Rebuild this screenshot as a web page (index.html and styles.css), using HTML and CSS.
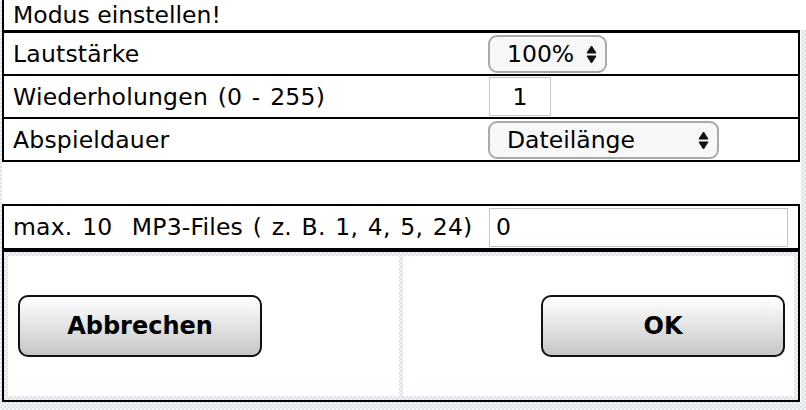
FILE: index.html
```html
<!DOCTYPE html>
<html lang="de">
<head>
<meta charset="utf-8">
<title>Modus einstellen!</title>
<link rel="stylesheet" href="styles.css">
</head>
<body>
<div class="title">Modus einstellen!</div>
<div class="panel">
  <div class="settings">
    <div class="row">
      <div class="label">Lautstärke</div>
      <div class="ctrl">
        <div class="select select-vol">
          <span class="select-text">100%</span>
          <svg class="arrows" width="11" height="19" viewBox="0 0 11 19"><path d="M1 8 L5.5 1 L10 8 Z M1 11 L5.5 18 L10 11 Z" fill="#111" stroke="#111" stroke-width="1" stroke-linejoin="round"/></svg>
        </div>
      </div>
    </div>
    <div class="row">
      <div class="label">Wiederholungen (0 - 255)</div>
      <div class="ctrl"><input class="num" type="text" value="1"></div>
    </div>
    <div class="row">
      <div class="label">Abspieldauer</div>
      <div class="ctrl">
        <div class="select select-dur">
          <span class="select-text">Dateilänge</span>
          <svg class="arrows" width="11" height="19" viewBox="0 0 11 19"><path d="M1 8 L5.5 1 L10 8 Z M1 11 L5.5 18 L10 11 Z" fill="#111" stroke="#111" stroke-width="1" stroke-linejoin="round"/></svg>
        </div>
      </div>
    </div>
  </div>

  <div class="files">
    <div class="row">
      <div class="label files-label">max. 10  MP3-Files ( z. B. 1, 4, 5, 24)</div>
      <div class="ctrl"><input class="list" type="text" value="0"></div>
    </div>
  </div>

  <div class="actions">
    <div class="cell cell-left"><button class="btn">Abbrechen</button></div>
    <div class="cell cell-right"><button class="btn">OK</button></div>
  </div>
</div>
</body>
</html>
```

FILE: styles.css
```css
html, body {
  margin: 0;
  padding: 0;
}

body {
  width: 806px;
  height: 410px;
  overflow: hidden;
  font-family: "DejaVu Sans", Verdana, sans-serif;
  font-size: 23.5px;
  color: #000;
  background: repeating-conic-gradient(#dde3e8 0 25%, #f1f3f5 0 50%) 0 0 / 4px 4px;
}

.title {
  margin-left: 2px;
  border-left: 2px solid #000;
  background: #fff;
  height: 30px;
  line-height: 30px;
  padding-left: 9px;
}

.panel {
  margin-left: 2px;
  width: 799px;
  background: #fff;
}

.settings {
  width: 798px;
  box-sizing: border-box;
  border: 2px solid #000;
  border-top-width: 3px;
}

.row {
  display: grid;
  grid-template-columns: 484px 1fr;
  align-items: center;
  height: 41px;
}

.settings .row + .row {
  border-top: 2px solid #000;
}

.label {
  padding-left: 9px;
  white-space: pre;
  word-spacing: 2px;
  letter-spacing: 0.2px;
}

.ctrl {
  display: flex;
  align-items: center;
}

.select {
  position: relative;
  box-sizing: border-box;
  height: 38px;
  border: 2px solid #a9a9a9;
  border-radius: 9px;
  background: #f7f7f7;
  padding-left: 17px;
  display: flex;
  align-items: center;
}

.select-vol {
  width: 119px;
}

.select-dur {
  width: 231px;
}

.arrows {
  position: absolute;
  right: 8px;
  top: 8px;
}

input {
  font-family: inherit;
  font-size: inherit;
  color: #000;
  box-sizing: border-box;
  height: 39px;
  border: 1px solid #c4c4c4;
  background: #fff;
  margin: 0;
  outline: none;
}

.num {
  width: 62px;
  margin-left: 1px;
  text-align: center;
  padding: 0;
}

.list {
  width: 299px;
  margin-left: 1px;
  padding: 0 0 0 6px;
}

.files {
  margin-top: 42px;
  width: 798px;
  box-sizing: border-box;
  border: 2px solid #000;
}

.files .row {
  height: 42px;
}

.actions {
  width: 798px;
  box-sizing: border-box;
  border: 2px solid #000;
  padding: 4px;
  display: grid;
  grid-template-columns: 1fr 1fr;
  gap: 4px;
  background: repeating-conic-gradient(#dde3e8 0 25%, #f1f3f5 0 50%) 0 0 / 4px 4px;
}

.cell {
  background: #fff;
  height: 140px;
  display: flex;
  align-items: center;
}

.cell-left {
  justify-content: flex-start;
  padding-left: 10px;
}

.cell-right {
  justify-content: flex-end;
  padding-right: 9px;
}

.btn {
  width: 244px;
  height: 62px;
  border: 2px solid #111;
  border-radius: 10px;
  background: linear-gradient(#ffffff, #c6c6c6);
  font-family: inherit;
  font-size: 24px;
  font-weight: bold;
  color: #000;
  padding: 0;
}
```
